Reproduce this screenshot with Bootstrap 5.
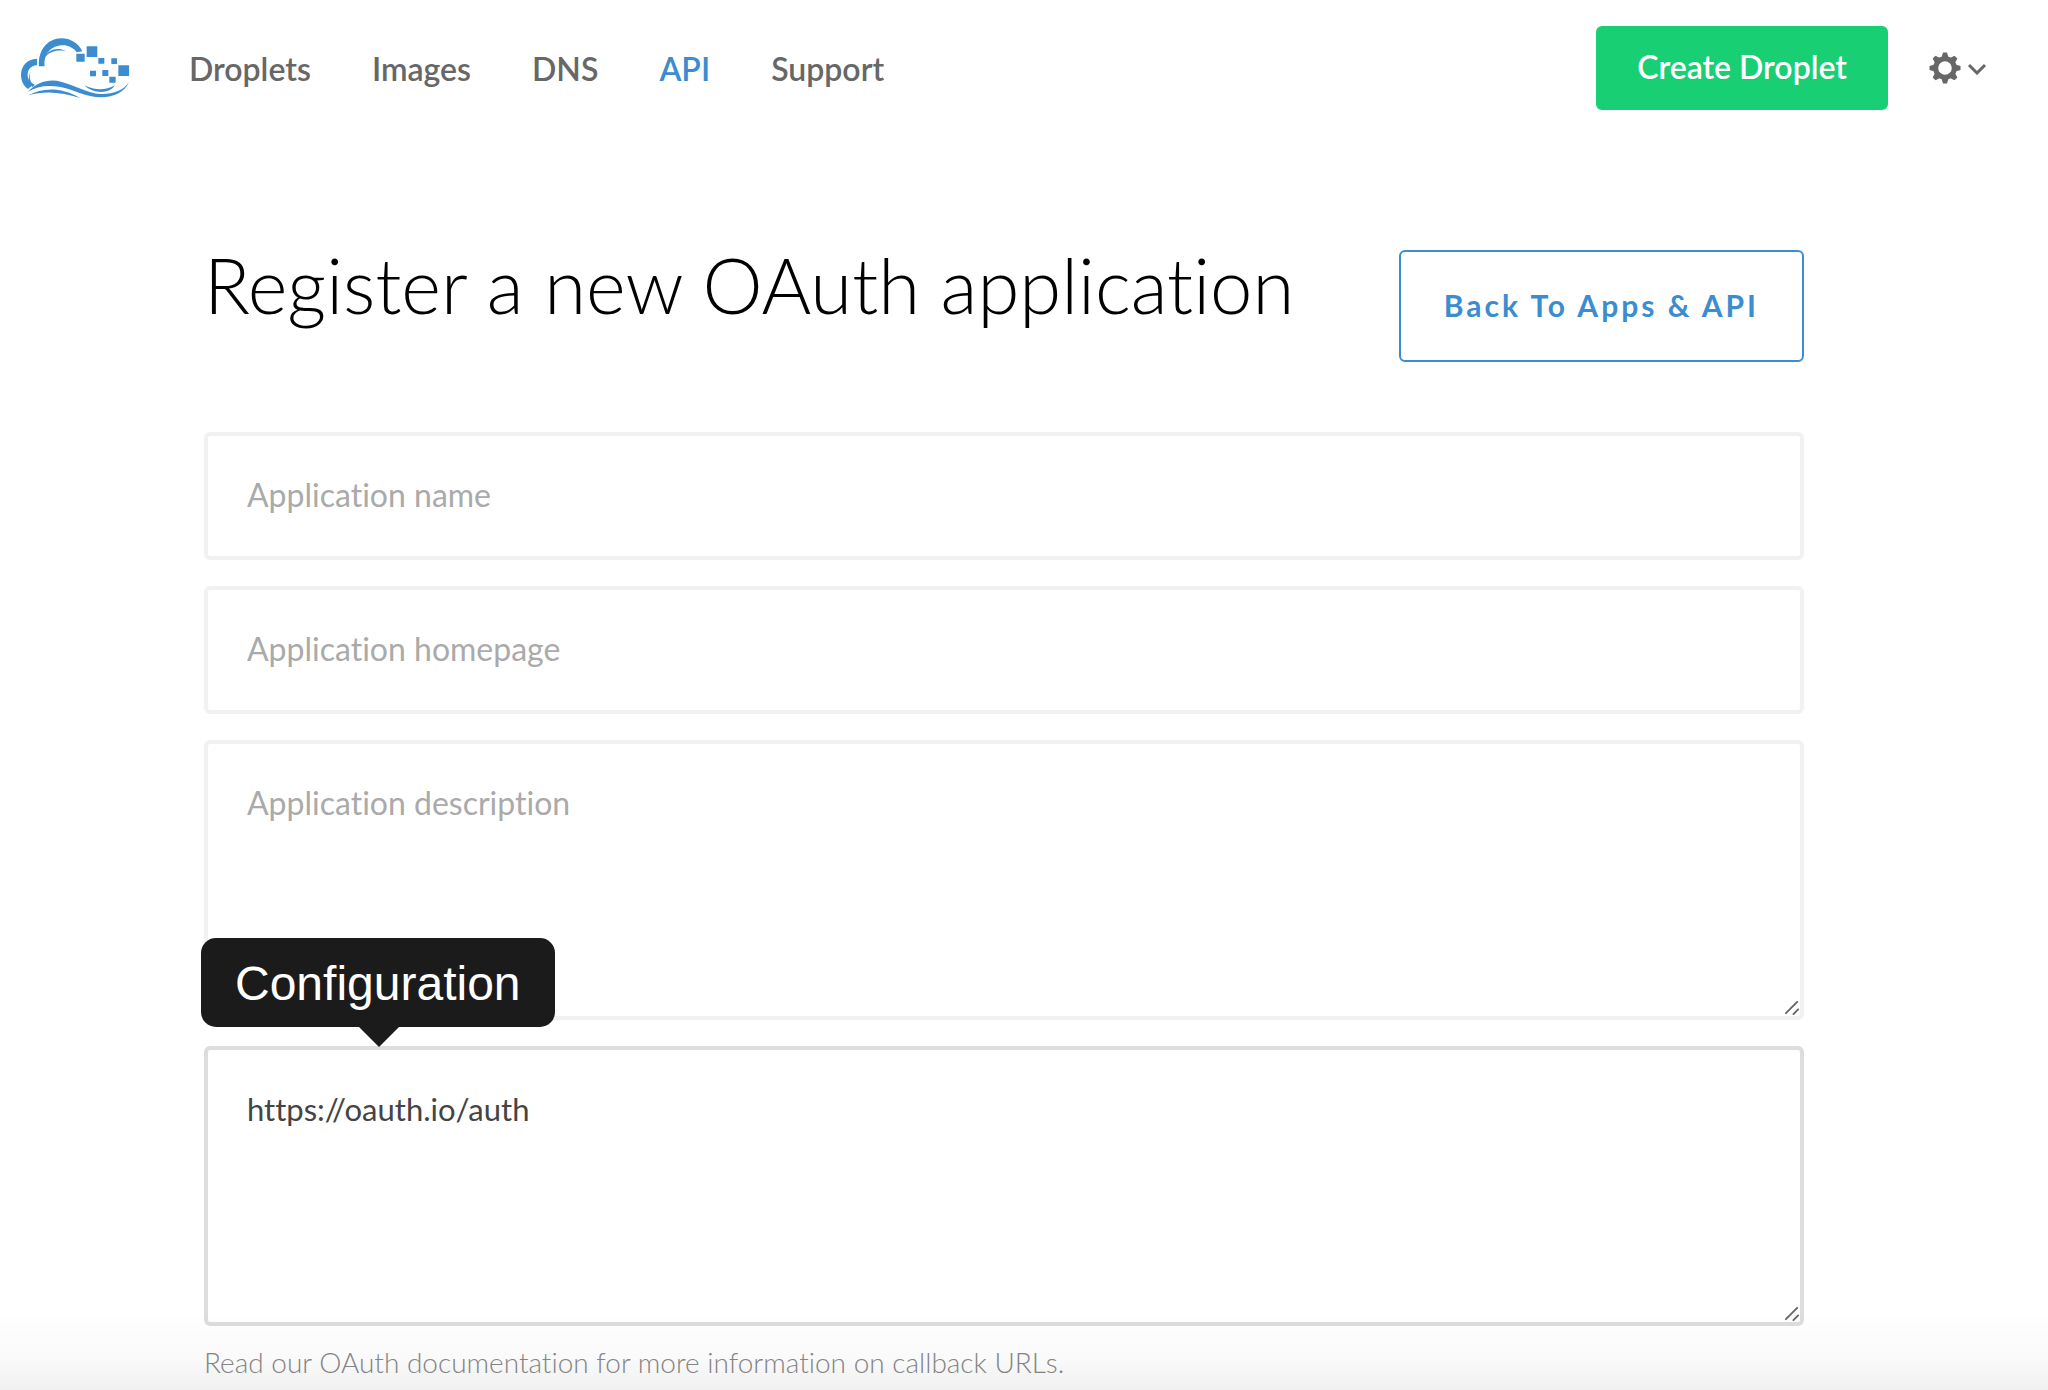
<!DOCTYPE html>
<html lang="en">
<head>
<meta charset="utf-8">
<meta name="viewport" content="width=device-width, initial-scale=1">
<title>Register a new OAuth application</title>
<link href="https://cdn.jsdelivr.net/npm/bootstrap@5.3.0/dist/css/bootstrap.min.css" rel="stylesheet">
<style>
  :root { --do-blue: #3b8dd0; --do-green: #18cf74; --do-gray: #676767; }
  body { font-family: Lato, "Open Sans", sans-serif; font-size: 32px; line-height: 40px; font-variant-ligatures: none; color: #444; background: #fff; }
  .topbar { padding: 26px 61px 26px 20px; }
  .brand-logo { width: 110px; height: 62px; }
  .main-menu { gap: 61px; margin-left: 59px; padding-top: 2px; }
  .main-menu .nav-link { padding: 0; color: var(--do-gray); font-weight: 600; }
  .main-menu .nav-link.active { color: var(--do-blue); }
  .btn-create { padding: 21px 41px 23px; font-size: 32px; line-height: 40px; font-weight: 600; border: 0; border-radius: 6px; background: var(--do-green); color: #fff; }
  .btn-create:hover { background: #14bb68; color: #fff; }
  .btn-settings { margin-left: 41px; border: 0; padding: 0; gap: 6px; color: var(--do-gray); }
  .page-wrap { padding-right: 40px; }
  .page-main { max-width: 1600px; padding-top: 114px; }
  .page-title { font-size: 76px; line-height: 70px; font-weight: 300; color: #000; }
  .btn-back { padding: 33px 43px 35px; font-size: 30px; line-height: 40px; font-weight: 700; letter-spacing: 3px; border: 2px solid var(--do-blue); border-radius: 6px; color: var(--do-blue); }
  .btn-back:hover { background: var(--do-blue); color: #fff; }
  .app-form { margin-top: 70px; gap: 26px; }
  .app-form .form-control { padding: 37px 39px 39px; font-size: 32px; line-height: 44px; font-variant-ligatures: none; color: #444; border: 4px solid #f1f1f1; border-radius: 6px; }
  .app-form textarea.form-control { height: 280px; display: block; }
  .app-form .form-control::placeholder { color: #aaa; }
  .app-form .field-current { font-size: 31px; border-color: #ddd; }
  .app-form textarea::-webkit-resizer { background: url("data:image/svg+xml,%3Csvg xmlns='http://www.w3.org/2000/svg' viewBox='0 0 16 16'%3E%3Cpath d='M1 13 13 1M9 14 14 9' stroke='%23666' stroke-width='2' stroke-linecap='round'/%3E%3C/svg%3E") no-repeat center / 15px; }
  .tip-label { left: -3px; bottom: calc(100% + 19px); padding: 18px 34px 15px; font: 48px/56px "Liberation Sans", sans-serif; color: #fff; background: #1b1b1b; border-radius: 15px; }
  .tip-label::after { content: ""; position: absolute; top: 100%; left: 50%; margin-left: -19px; border: 20px solid transparent; border-top-color: #1b1b1b; border-bottom: 0; }
  .help-note { margin-top: 18px; font-size: 28px; line-height: 36px; font-weight: 300; color: #888; }
  .edge-fade { height: 80px; background: linear-gradient(rgba(0,0,0,0), rgba(0,0,0,.02) 60%, rgba(0,0,0,.06)); pointer-events: none; }
</style>
</head>
<body>
<header class="topbar d-flex align-items-center">
  <a href="#" aria-label="Home" class="d-flex">
    <svg class="brand-logo" viewBox="60 50 330 186" aria-hidden="true" fill="#3b8dd0">
      <path d="M117 138C113 90 143 54 184 54c27 0 51 14 63 39l-17 3c-9-13-24-21-42-21-34 0-58 26-54 63z"/>
      <path d="M136 109c6-19 36-31 61-17-22-4-45 0-61 17z"/>
      <path d="M111 115C80 116 63 138 63 164c0 18 8 33 21 42 5-6 12-10 20-13-14-5-21-17-21-29 0-17 11-28 28-29z"/>
      <path d="M92 154c-6 15-2 34 12 41l-6 5c-13-10-15-32-6-46z"/>
      <path d="M84 214c28-29 63-39 99-30 46 12 78 34 118 37 40 1 68-10 86-35-14 29-44 45-84 45-46 0-79-23-121-31-38-7-71-3-98 14z"/>
      <path d="M84 225c42-21 93-28 156 8-52-16-101-23-156-8z"/>
      <path d="M253 195c33 16 63 16 92 0-17 27-65 26-92 0z"/>
      <path d="M229 100h25v24h-25zM260 78h32v32h-32zM295 113h18v17h-18zM334 114h17v17h-17zM355 135h32v32h-32zM270 151h18v17h-18zM307 149h18v18h-18zM328 169h19v18h-19z"/>
    </svg>
  </a>
  <nav class="nav main-menu" aria-label="Main">
    <a class="nav-link" href="#">Droplets</a>
    <a class="nav-link" href="#">Images</a>
    <a class="nav-link" href="#">DNS</a>
    <a class="nav-link active" aria-current="page" href="#">API</a>
    <a class="nav-link" href="#">Support</a>
  </nav>
  <button type="button" class="btn btn-create ms-auto">Create Droplet</button>
  <button type="button" class="btn btn-settings d-flex align-items-center" aria-label="Settings">
    <svg width="32" height="32" viewBox="-16 -16 32 32" aria-hidden="true">
      <circle r="9.300" fill="none" stroke="currentColor" stroke-width="5"/>
      <g fill="currentColor">
        <path id="cog" d="M-3.500-10.500-2-15.500H2L3.500-10.500zM-3.500 10.500-2 15.500H2L3.500 10.500z"/>
        <use href="#cog" transform="rotate(45)"/><use href="#cog" transform="rotate(90)"/><use href="#cog" transform="rotate(135)"/>
      </g>
    </svg>
    <svg width="20" height="14" viewBox="0 0 20 14" fill="none" stroke="currentColor" stroke-width="3" aria-hidden="true"><path d="m2 4 8 8 8-8"/></svg>
  </button>
</header>
<div class="page-wrap">
  <main class="page-main mx-auto">
    <div class="d-flex justify-content-between align-items-start">
      <h1 class="page-title m-0">Register a new OAuth application</h1>
      <a class="btn btn-back" href="#">Back To Apps &amp; API</a>
    </div>
    <form class="app-form d-flex flex-column">
      <input type="text" class="form-control" id="app-name" aria-label="Application name" placeholder="Application name">
      <input type="text" class="form-control" id="app-home" aria-label="Application homepage" placeholder="Application homepage">
      <textarea class="form-control" id="app-desc" aria-label="Application description" placeholder="Application description"></textarea>
      <div class="position-relative">
        <label class="tip-label position-absolute" for="app-callback">Configuration</label>
        <textarea class="form-control field-current" id="app-callback" spellcheck="false" aria-describedby="callback-note">https://oauth.io/auth</textarea>
      </div>
    </form>
    <p class="help-note mb-0" id="callback-note">Read our OAuth documentation for more information on callback URLs.</p>
  </main>
</div>
<div class="edge-fade fixed-bottom"></div>
<script src="https://cdn.jsdelivr.net/npm/bootstrap@5.3.0/dist/js/bootstrap.bundle.min.js"></script>
</body>
</html>
